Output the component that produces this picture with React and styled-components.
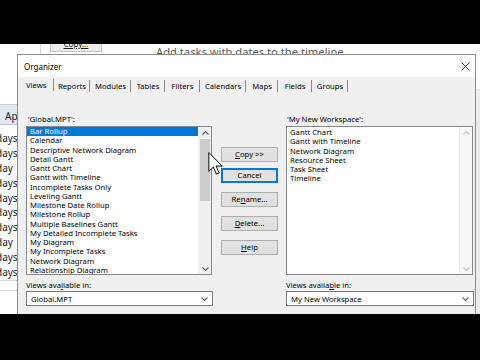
import React from 'react';
import styled, { createGlobalStyle } from 'styled-components';

const Global = createGlobalStyle`
  html, body {
    margin: 0;
    padding: 0;
    background: #000;
  }
  body {
    width: 480px;
    height: 360px;
    overflow: hidden;
    font-family: "Noto Sans", "Liberation Sans", sans-serif;
  }
`;

// colours kept in one place
const c = {
  face: '#f0f0f0',
  border: '#7a7a7a',
  btn: '#e1e1e1',
  btnBorder: '#adadad',
  accent: '#0078d7',
  text: '#000',
};

const Frame = styled.div`
  width: 480px;
  height: 360px;
  background: #000;
  display: flex;
  flex-direction: column;
`;

const Letterbox = styled.div`
  flex: none;
  height: ${({ $h }) => $h}px;
  background: #000;
`;

const Screen = styled.div`
  position: relative;
  flex: none;
  height: 270px;
  background: #fff;
  overflow: hidden;
`;

/* ---------- the MS Project window behind the dialog ---------- */

const AppBack = styled.div`
  display: flex;
  flex-direction: column;
  height: 100%;
`;

const Ribbon = styled.div`
  flex: none;
  height: 11px;
  display: flex;
  align-items: flex-end;
  overflow: hidden;
  background: #fff;
`;

const RibbonSep = styled.div`
  width: 1px;
  height: 11px;
  margin-left: 40px;
  background: #d6d6d6;
`;

const RibbonButton = styled.div`
  width: 52px;
  height: 14px;
  margin: 0 0 3px 9px;
  box-sizing: border-box;
  border: 1px solid #c4c4c4;
  background: #ececec;
  font-size: 8px;
  text-align: center;
  line-height: 9px;
  color: #222;
  text-decoration: underline;
`;

const RibbonHint = styled.div`
  margin: 0 0 -3px 54px;
  font-size: 11.2px;
  line-height: 13px;
  color: #5a5a5a;
  white-space: nowrap;
`;

const Workspace = styled.div`
  flex: 1;
  display: flex;
`;

const Sheet = styled.div`
  width: 80px;
  padding-top: 49px;
  display: flex;
  flex-direction: column;
`;

const SheetHeader = styled.div`
  height: 19px;
  border-top: 1px solid #d0d0d0;
  border-bottom: 1px solid #c6c6c6;
  background: #dfe8f3;
  font-size: 10px;
  line-height: 22px;
  padding-left: 5px;
  color: #222;
  margin-bottom: 6px;
`;

const SheetRow = styled.div`
  height: 14.9px;
  font-size: 10px;
  line-height: 14.9px;
  color: #222;
  margin-left: -4px;
  white-space: nowrap;
`;

const SheetFoot = styled.div`
  height: 9px;
  border-top: 1px solid #d8d8d8;
  border-bottom: 1px solid #d8d8d8;
`;

const Spacer = styled.div`
  flex: 1;
`;

const RightEdge = styled.div`
  width: 4px;
  margin-top: 34px;
  background: #ececec;
  border-left: 1px solid #d0d0d0;
`;

/* ---------- Organizer dialog ---------- */

const Dialog = styled.div`
  position: absolute;
  left: 17px;
  top: 10px;
  width: 459px;
  height: 262px;
  box-sizing: border-box;
  border: 1px solid #8c8c8c;
  background: ${c.face};
  display: flex;
  flex-direction: column;
  font-size: 7.7px;
  color: ${c.text};
`;

const TitleBar = styled.div`
  flex: none;
  height: 22px;
  background: #fff;
  display: flex;
  align-items: center;
  justify-content: space-between;
  padding: 0 5px 0 6px;
  font-size: 8px;
`;

const Body = styled.div`
  flex: 1;
  padding: 0 4px 0 8px;
  display: flex;
  flex-direction: column;
`;

const TabStrip = styled.div`
  display: flex;
  align-items: flex-end;
  height: 15px;
`;

const Tab = styled.div`
  box-sizing: border-box;
  width: ${({ $w }) => $w}px;
  height: 12px;
  line-height: 12px;
  padding-left: ${({ $active }) => ($active ? 0 : 1)}px;
  text-align: ${({ $active }) => ($active ? 'left' : 'center')};
  border-right: 1px solid #8a8a8a;
  transform: translateY(${({ $active }) => ($active ? -1 : 0)}px);
  white-space: nowrap;
`;

const Grid = styled.div`
  margin-top: 21px;
  display: grid;
  grid-template-columns: 186px 57px 186px;
  grid-template-rows: 13px 149px 16px 15px;
  column-gap: 9px;
  grid-template-areas:
    'lt . rt'
    'll bt rl'
    'lv . rv'
    'lc . rc';
`;

const Label = styled.div`
  grid-area: ${({ $area }) => $area};
  line-height: ${({ $lh }) => $lh || 13}px;
  padding-top: ${({ $pt }) => $pt || 0}px;
  margin-left: ${({ $ml }) => $ml || 0}px;
  white-space: nowrap;
`;

const ListBox = styled.div`
  grid-area: ${({ $area }) => $area};
  box-sizing: border-box;
  border: 1px solid #828790;
  background: #fff;
  display: flex;
  margin-left: ${({ $ml }) => $ml || 0}px;
`;

const Items = styled.div`
  flex: 1;
  padding-top: ${({ $pt }) => $pt || 0}px;
  overflow: hidden;
`;

const Item = styled.div`
  height: 9.25px;
  line-height: 9.25px;
  padding-left: 3px;
  white-space: nowrap;
  background: ${({ $sel }) => ($sel ? c.accent : 'transparent')};
  color: ${({ $sel }) => ($sel ? '#fff' : c.text)};
`;

const ScrollBar = styled.div`
  flex: none;
  width: 12px;
  display: flex;
  flex-direction: column;
  background: ${({ $off }) => ($off ? '#f7f7f7' : c.face)};
  border-left: 1px solid ${({ $off }) => ($off ? '#ececec' : c.face)};
`;

const ScrollArrow = styled.div`
  flex: none;
  height: 11px;
  display: flex;
  align-items: center;
  justify-content: center;
`;

const Thumb = styled.div`
  flex: none;
  height: 62px;
  margin: 1px 1px 0 1px;
  background: #cdcdcd;
`;

const ButtonCol = styled.div`
  grid-area: bt;
  display: flex;
  flex-direction: column;
  padding-top: 21px;
`;

const Button = styled.div`
  height: 15px;
  box-sizing: border-box;
  margin-top: ${({ $mt }) => $mt || 0}px;
  border: 1px solid ${({ $focus }) => ($focus ? c.accent : c.btnBorder)};
  box-shadow: ${({ $focus }) => ($focus ? `inset 0 0 0 1px ${c.accent}` : 'none')};
  background: ${c.btn};
  text-align: center;
  line-height: 13px;
  white-space: nowrap;
`;

const Key = styled.span`
  text-decoration: underline;
`;

const Combo = styled.div`
  grid-area: ${({ $area }) => $area};
  box-sizing: border-box;
  border: 1px solid ${c.border};
  background: #fff;
  display: flex;
  align-items: center;
  justify-content: space-between;
  padding: 0 4px 0 4px;
  margin-left: ${({ $ml }) => $ml || 0}px;
  margin-right: ${({ $mr }) => $mr || 0}px;
`;

const Cursor = styled.svg`
  position: absolute;
  left: 208px;
  top: 108px;
`;

function Chevron({ up, color = '#606060' }) {
  return (
    <svg width="7" height="4" viewBox="0 0 7 4">
      <polyline
        points={up ? '0.5,3.5 3.5,0.5 6.5,3.5' : '0.5,0.5 3.5,3.5 6.5,0.5'}
        fill="none"
        stroke={color}
        strokeWidth="1.1"
      />
    </svg>
  );
}

function CloseIcon() {
  return (
    <svg width="9" height="9" viewBox="0 0 9 9">
      <path d="M0.5 0.5 L8.5 8.5 M8.5 0.5 L0.5 8.5" stroke="#222" strokeWidth="0.9" />
    </svg>
  );
}

const tabs = [
  ['Views', 28],
  ['Reports', 36],
  ['Modules', 41],
  ['Tables', 34],
  ['Filters', 35],
  ['Calendars', 46],
  ['Maps', 32],
  ['Fields', 34],
  ['Groups', 36],
];

const globalViews = [
  'Bar Rollup',
  'Calendar',
  'Descriptive Network Diagram',
  'Detail Gantt',
  'Gantt Chart',
  'Gantt with Timeline',
  'Incomplete Tasks Only',
  'Leveling Gantt',
  'Milestone Date Rollup',
  'Milestone Rollup',
  'Multiple Baselines Gantt',
  'My Detailed Incomplete Tasks',
  'My Diagram',
  'My Incomplete Tasks',
  'Network Diagram',
  'Relationship Diagram',
];

const workspaceViews = [
  'Gantt Chart',
  'Gantt with Timeline',
  'Network Diagram',
  'Resource Sheet',
  'Task Sheet',
  'Timeline',
];

const durations = ['days', 'days', 'day', 'days', 'days', 'days', 'days', 'day', 'days', 'days'];

export default function App() {
  return (
    <>
      <Global />
      <Frame>
        <Letterbox $h={44} />
        <Screen>
          <AppBack>
            <Ribbon>
              <RibbonSep />
              <RibbonButton>Copy...</RibbonButton>
              <RibbonHint>Add tasks with dates to the timeline</RibbonHint>
            </Ribbon>
            <Workspace>
              <Sheet>
                <SheetHeader>Ap</SheetHeader>
                {durations.map((d, i) => (
                  <SheetRow key={i}>{d}</SheetRow>
                ))}
                <SheetFoot />
              </Sheet>
              <Spacer />
              <RightEdge />
            </Workspace>
          </AppBack>

          <Dialog>
            <TitleBar>
              <span>Organizer</span>
              <CloseIcon />
            </TitleBar>
            <Body>
              <TabStrip>
                {tabs.map(([t, w], i) => (
                  <Tab key={t} $w={w} $active={i === 0}>
                    {t}
                  </Tab>
                ))}
              </TabStrip>

              <Grid>
                <Label $area="lt" $ml={2}>'Global.MPT':</Label>
                <ListBox $area="ll">
                  <Items>
                    {globalViews.map((v, i) => (
                      <Item key={v} $sel={i === 0}>
                        {v}
                      </Item>
                    ))}
                  </Items>
                  <ScrollBar>
                    <ScrollArrow>
                      <Chevron up />
                    </ScrollArrow>
                    <Thumb />
                    <Spacer />
                    <ScrollArrow>
                      <Chevron />
                    </ScrollArrow>
                  </ScrollBar>
                </ListBox>
                <Label $area="rt">'My New Workspace':</Label>

                <ButtonCol>
                  <Button>
                    <Key>C</Key>opy &gt;&gt;
                  </Button>
                  <Button $mt={6} $focus>
                    Cancel
                  </Button>
                  <Button $mt={9}>
                    Re<Key>n</Key>ame...
                  </Button>
                  <Button $mt={9}>
                    <Key>D</Key>elete...
                  </Button>
                  <Button $mt={9}>
                    <Key>H</Key>elp
                  </Button>
                </ButtonCol>

                <ListBox $area="rl" $ml={-1}>
                  <Items $pt={1}>
                    {workspaceViews.map((v) => (
                      <Item key={v}>{v}</Item>
                    ))}
                  </Items>
                  <ScrollBar $off>
                    <ScrollArrow>
                      <Chevron up color="#c8c8c8" />
                    </ScrollArrow>
                    <Spacer />
                    <ScrollArrow>
                      <Chevron color="#c8c8c8" />
                    </ScrollArrow>
                  </ScrollBar>
                </ListBox>

                <Label $area="lv" $lh={12} $pt={4}>
                  Views ava<Key>i</Key>lable in:
                </Label>
                <Label $area="rv" $lh={12} $pt={4} $ml={-1}>
                  Views availa<Key>b</Key>le in:
                </Label>

                <Combo $area="lc" $mr={-1}>
                  <span>Global.MPT</span>
                  <Chevron />
                </Combo>
                <Combo $area="rc" $ml={-1} $mr={-1}>
                  <span>My New Workspace</span>
                  <Chevron />
                </Combo>
              </Grid>
            </Body>
          </Dialog>

          <Cursor width="15" height="23" viewBox="0 0 12 19">
            <path
              d="M0.5 0.5 L0.5 16 L4.2 12.4 L6.8 18.3 L9 17.3 L6.5 11.6 L11.5 11.6 Z"
              fill="#fff"
              stroke="#000"
              strokeWidth="0.8"
              strokeLinejoin="round"
            />
          </Cursor>
        </Screen>
        <Letterbox $h={46} />
      </Frame>
    </>
  );
}
